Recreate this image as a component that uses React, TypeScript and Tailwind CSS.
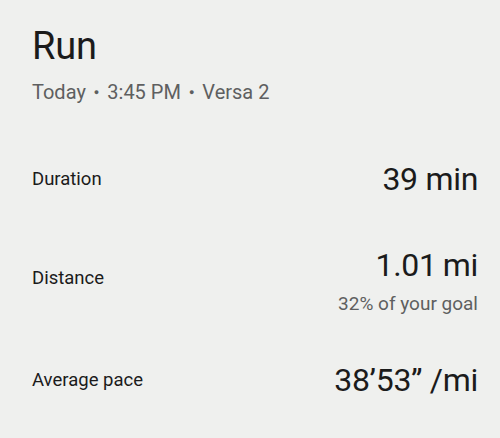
export default function App() {
  return (
    <div
      className="h-[438px] w-[500px] overflow-hidden bg-[#eff0ee] pl-8 pr-[22px] text-[#1b1b1b]"
      style={{ fontFamily: "Roboto, 'Noto Sans', sans-serif" }}
    >
      <h1 className="pt-[22px] text-[38px] leading-[48px] tracking-[-0.2px]">Run</h1>
      <div className="mt-[9px] flex items-center gap-[8px] text-[20px] leading-[26px] text-[#5e5f60]">
        <span>Today</span>
        <span className="text-[9px]">●</span>
        <span>3:45 PM</span>
        <span className="text-[9px]">●</span>
        <span>Versa 2</span>
      </div>

      <div className="mt-[52px] flex h-[44px] items-center justify-between">
        <span className="text-[18.5px] leading-[24px]">Duration</span>
        <span className="text-[32px] leading-[44px] tracking-[-0.3px]">39 min</span>
      </div>

      <div className="mt-[42px] flex items-start justify-between">
        <span className="mt-[23px] text-[18.5px] leading-[24px]">Distance</span>
        <div className="flex flex-col items-end">
          <span className="text-[32px] leading-[44px] tracking-[-0.3px]">
            1.01<span className="ml-[6px]">mi</span>
          </span>
          <span className="mt-[5px] text-[19px] leading-[24px] text-[#5e5f60]">32% of your goal</span>
        </div>
      </div>

      <div className="mt-[42px] flex h-[44px] items-center justify-between">
        <span className="text-[18.5px] leading-[24px]">Average pace</span>
        <span className="text-[32px] leading-[44px] tracking-[-0.3px]">38’53” /mi</span>
      </div>
    </div>
  );
}
